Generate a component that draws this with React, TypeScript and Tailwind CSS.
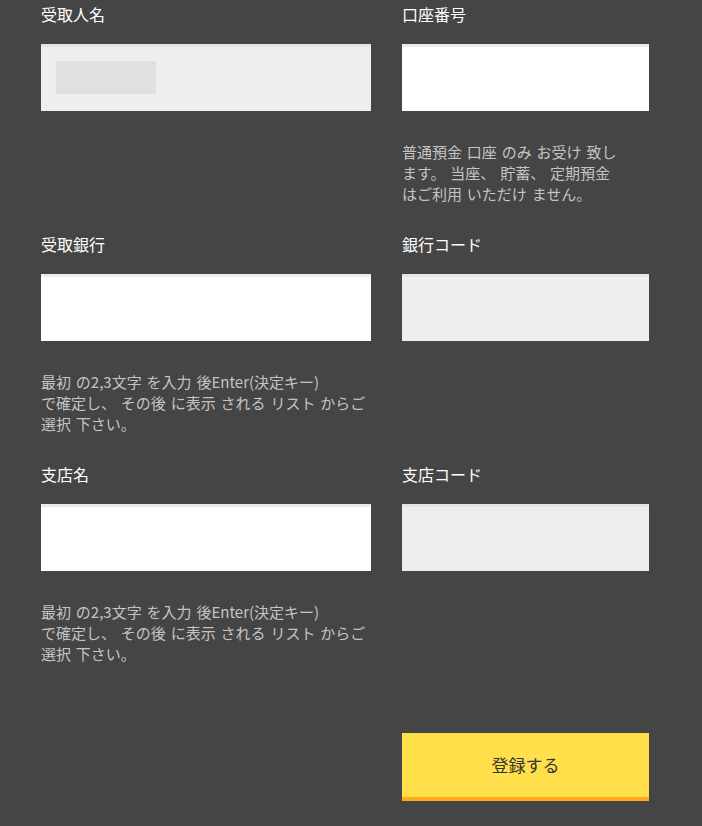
import React from "react";

const font = { fontFamily: '"Noto Sans CJK JP", "Noto Sans", sans-serif' };

function Label({ children }: { children: React.ReactNode }) {
  return <div className="text-[16px] leading-[22px] text-white">{children}</div>;
}

function Help({ lines }: { lines: string[] }) {
  return (
    <div className="mt-[30px] text-[15px] leading-[21px] text-[#c4c4c4] whitespace-nowrap [word-spacing:1.5px]">
      {lines.map((l, i) => (
        <div key={i}>{l}</div>
      ))}
    </div>
  );
}

function Input({ disabled, skeleton }: { disabled?: boolean; skeleton?: boolean }) {
  return (
    <div
      className={
        "mt-[19px] h-[67px] border-t-[3px] " +
        (disabled ? "bg-[#eeeeee] border-[#e4e4e4]" : "bg-white border-[#ececec]")
      }
    >
      {skeleton && <div className="ml-[15px] mt-[14px] w-[100px] h-[33px] bg-[#e0e0e0]" />}
    </div>
  );
}

const bankHelp = [
  "最初 の2,3文字 を入力 後Enter(決定キー)",
  "で確定し、 その後 に表示 される リスト からご",
  "選択 下さい。",
];

export default function App() {
  return (
    <div className="min-h-[826px] w-[702px] bg-[#454545] pl-[41px] pt-[3px]" style={font}>
      <div className="grid grid-cols-[330px_247px] gap-x-[31px] gap-y-[29px]">
        <div>
          <Label>受取人名</Label>
          <Input disabled skeleton />
        </div>
        <div>
          <Label>口座番号</Label>
          <Input />
          <Help
            lines={[
              "普通預金 口座 のみ お受け 致し",
              "ます。 当座、 貯蓄、 定期預金",
              "はご利用 いただけ ません。",
            ]}
          />
        </div>

        <div>
          <Label>受取銀行</Label>
          <Input />
          <Help lines={bankHelp} />
        </div>
        <div>
          <Label>銀行コード</Label>
          <Input disabled />
        </div>

        <div>
          <Label>支店名</Label>
          <Input />
          <Help lines={bankHelp} />
        </div>
        <div>
          <Label>支店コード</Label>
          <Input disabled />
        </div>

        <div />
        <div className="mt-[40px]">
          <button className="flex h-[68px] w-full items-center justify-center border-b-4 border-[#ffab1c] bg-[#ffdf4a] text-[17px] text-[#333333]">
            登録する
          </button>
        </div>
      </div>
    </div>
  );
}
